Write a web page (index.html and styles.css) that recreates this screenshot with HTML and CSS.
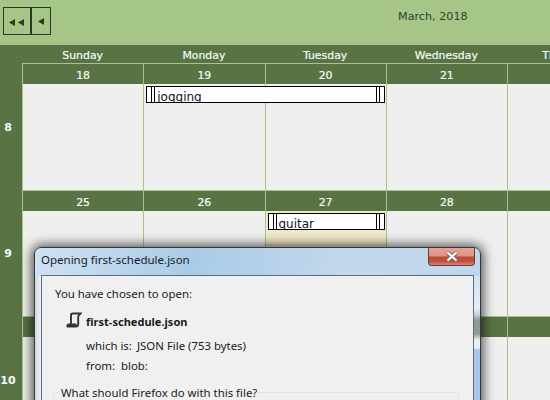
FILE: index.html
```html
<!DOCTYPE html>
<html lang="en">
<head>
<meta charset="utf-8">
<title>Schedule</title>
<link rel="stylesheet" href="styles.css">
</head>
<body>
<div class="page">
  <header class="toolbar">
    <div class="nav">
      <button class="nav-btn nav-btn-wide" aria-label="Previous year">
        <svg width="16" height="7" viewBox="0 0 16 7"><path class="arrow" d="M0 3.5 6 0V7Z M9 3.5 15 0V7Z"/></svg>
      </button>
      <button class="nav-btn" aria-label="Previous month">
        <svg width="7" height="7" viewBox="0 0 7 7"><path class="arrow" d="M0 3.5 6 0V7Z"/></svg>
      </button>
    </div>
    <div class="month">March, 2018</div>
  </header>

  <div class="weekdays">
    <div></div>
    <div>Sunday</div><div>Monday</div><div>Tuesday</div><div>Wednesday</div><div>Thursday</div>
  </div>

  <section class="week">
    <div class="week-no">8</div>
    <div class="date">18</div><div class="date">19</div><div class="date">20</div><div class="date">21</div><div class="date"></div>
    <div class="cell"></div>
    <div class="cell">
      <div class="event event-jogging"><span class="grip"></span><span class="event-label">jogging</span><span class="grip"></span></div>
    </div>
    <div class="cell"></div><div class="cell"></div><div class="cell"></div>
  </section>

  <section class="week">
    <div class="week-no">9</div>
    <div class="date">25</div><div class="date">26</div><div class="date">27</div><div class="date">28</div><div class="date"></div>
    <div class="cell"></div><div class="cell"></div>
    <div class="cell cell-today">
      <div class="slot">
        <div class="event event-guitar"><span class="grip"></span><span class="event-label">guitar</span><span class="grip"></span></div>
      </div>
    </div>
    <div class="cell"></div><div class="cell"></div>
  </section>

  <section class="week">
    <div class="week-no">10</div>
    <div class="date"></div><div class="date"></div><div class="date"></div><div class="date"></div><div class="date"></div>
    <div class="cell"></div><div class="cell"></div><div class="cell"></div><div class="cell"></div><div class="cell"></div>
  </section>
</div>

<div class="dialog">
  <div class="dialog-title">
    <span class="dialog-name">Opening first-schedule.json</span>
    <span class="close">
      <svg width="14" height="11" viewBox="0 0 14 11"><path class="close-x-edge" d="M2.5 1.5 11.5 9.5M11.5 1.5 2.5 9.5"/><path class="close-x" d="M2.5 1.5 11.5 9.5M11.5 1.5 2.5 9.5"/></svg>
    </span>
  </div>
  <div class="dialog-body">
    <p class="chosen">You have chosen to open:</p>
    <div class="file">
      <svg width="16" height="16" viewBox="0 0 16 16"><path class="file-icon" d="M5 13V3Q5 1.5 6.5 1.5H14.5L13 3.2Q12.2 4 12.2 5V12.5Q12.2 14.5 10 14.5H1.5Q1 12.5 3 12.5H9.5V14.3"/></svg>
      <strong>first-schedule.json</strong>
    </div>
    <div class="meta"><span class="meta-key meta-key-which">which is:</span><span>JSON File (753 bytes)</span></div>
    <div class="meta"><span class="meta-key meta-key-from">from:</span><span>blob:</span></div>
    <fieldset class="choice">
      <legend>What should Firefox do with this file?</legend>
    </fieldset>
  </div>
</div>
</body>
</html>
```
FILE: styles.css
```css
html, body {
  margin: 0;
  padding: 0;
  width: 550px;
  height: 400px;
  overflow: hidden;
  background: #a5c585;
}

.page {
  width: 550px;
  height: 400px;
  overflow: hidden;
  font-family: "DejaVu Sans", sans-serif;
  font-size: 10.9px;
  color: #f2fbf8;
  -webkit-text-stroke: 0.2px #f2fbf8;
}

.toolbar {
  height: 45px;
  background: #a5c686;
  display: flex;
  box-sizing: border-box;
  padding: 7px 0 0 3px;
}

.nav {
  display: flex;
  height: 28px;
}

.nav-btn {
  margin: 0;
  padding: 2px 0 0;
  height: 28px;
  width: 19px;
  background: transparent;
  border: 1px solid #2b3a24;
  display: flex;
  align-items: center;
  justify-content: center;
}

.nav-btn-wide {
  width: 29px;
  border-right-width: 2px;
}

.nav-btn + .nav-btn {
  border-left-width: 0;
  padding-top: 0;
}

.arrow {
  fill: #3a3226;
}

.month {
  margin-left: 347px;
  padding-top: 3px;
  color: #33402e;
  -webkit-text-stroke: 0;
  font-size: 11.2px;
  line-height: 14px;
}

.weekdays,
.week {
  display: grid;
  grid-template-columns: 22px repeat(5, 121.25px);
}

.weekdays {
  height: 18px;
  line-height: 21px;
  background: #5a7344;
  text-align: center;
}

.week {
  grid-template-rows: 21px 1fr;
  height: 126.5px;
  background: #5a7344;
}

.week-no {
  grid-column: 1;
  grid-row: 1 / span 2;
  align-self: center;
  width: 16px;
  padding-top: 2px;
  text-align: center;
  font-weight: bold;
  font-size: 11px;
  -webkit-text-stroke: 0;
}

.date {
  box-sizing: border-box;
  border-top: 1px solid #a5c686;
  border-left: 1px solid #a5c686;
  grid-row: 1;
  line-height: 23px;
  text-align: center;
}

.cell {
  grid-row: 2;
  background: #efefef;
  border-left: 1px solid #a5c686;
}

.cell-today {
  background: linear-gradient(#f2ebcd, #ece2bd);
}

.slot {
  height: 31px;
  border-bottom: 1px dotted #c9c4ac;
}

.event {
  position: relative;
  z-index: 1;
  box-sizing: border-box;
  height: 17px;
  display: flex;
  background: #fff;
  border: 1px solid #000;
  color: #10102a;
  -webkit-text-stroke: 0;
  font-size: 12px;
  line-height: 20px;
  overflow: hidden;
  margin-top: 2px;
}

.event-jogging {
  width: 239px;
  margin-left: 2px;
}

.event-guitar {
  width: 117px;
  margin-left: 2px;
}

.grip {
  flex: none;
  box-sizing: border-box;
  width: 8px;
  border-right: 1px solid #000;
  background: linear-gradient(90deg, transparent 4px, #000 4px, #000 5px, transparent 5px);
}

.event-label {
  flex: 1;
  padding-left: 2px;
}

.event .grip:last-child {
  border-right: 0;
  border-left: 1px solid #000;
  background: linear-gradient(90deg, transparent 2px, #000 2px, #000 3px, transparent 3px);
}

.dialog {
  position: absolute;
  z-index: 2;
  left: 34px;
  top: 247px;
  width: 447px;
  height: 220px;
  box-sizing: border-box;
  padding: 0 6px;
  border: 1px solid #33383f;
  border-radius: 7px 7px 0 0;
  background:
    linear-gradient(100deg, #d0e2f3 0%, #a9cbe8 35%, #c3d8ec 70%, #c0d6ea 100%) 0 0 / 100% 28px no-repeat,
    linear-gradient(90deg, #cfd8df, #eef3f7) 0 0 / 6px 100% no-repeat,
    linear-gradient(#c4d9ec 0, #e4eef7 60px, #ccd6dc 66px, #8f9a94 72px, #8f9a94 86px, #e8f0f6 92px, #e8f0f6 100px, #a6c8e6 102px, #a6c8e6 100%);
  box-shadow: 0 0 12px 2px rgba(0, 0, 0, 0.7);
  font-family: "Noto Sans", sans-serif;
  font-size: 11.4px;
  color: #1a1a1a;
}

.dialog-title {
  height: 27px;
  display: flex;
  justify-content: space-between;
  font-size: 11.5px;
}

.dialog-name {
  line-height: 24px;
}

.close {
  width: 47px;
  height: 18px;
  box-sizing: border-box;
  margin-right: -1px;
  border: 1px solid #6e3a35;
  border-top: 0;
  border-radius: 0 0 4px 4px;
  background: linear-gradient(#e6a397 0%, #df9285 48%, #bb4a39 52%, #bf5142 78%, #d58779 100%);
  display: flex;
  align-items: center;
  justify-content: center;
}

.close-x-edge {
  fill: none;
  stroke: #5d4a4a;
  stroke-width: 4;
}

.close-x {
  fill: none;
  stroke: #f4f4f4;
  stroke-width: 2.4;
}

.dialog-body {
  box-sizing: border-box;
  height: 200px;
  background: #f0f0f0;
  border: 1px solid #5d6b7e;
  padding: 10px 14px 0 13px;
}

.chosen {
  margin: 0;
  line-height: 16px;
}

.file {
  display: flex;
  align-items: center;
  gap: 4px;
  margin: 10px 0 0 11px;
  height: 16px;
  font-size: 11.05px;
}

.file strong {
  margin-top: 2px;
}

.file-icon {
  fill: none;
  stroke: #333;
  stroke-width: 1.9;
}

.meta {
  display: flex;
  margin: 0 0 0 31px;
  line-height: 16px;
  padding-top: 4px;
}

.file + .meta {
  padding-top: 10px;
}

.meta-key {
  flex: none;
}

.meta-key-which {
  width: 51px;
}

.meta-key-from {
  width: 35px;
}

.choice {
  margin: 11px 0 0 -2px;
  padding: 0;
  height: 60px;
  border: 1px solid #dce4ea;
  border-radius: 3px;
}

.choice legend {
  padding: 0 1px;
  margin-left: 6px;
}
```
